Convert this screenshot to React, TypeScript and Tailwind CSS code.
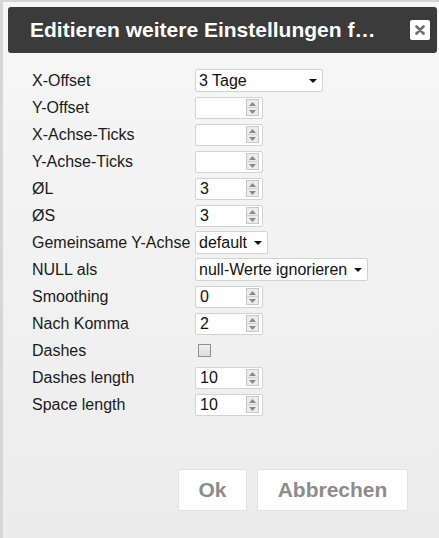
import React from "react";

const font = { fontFamily: '"Liberation Sans", Arial, sans-serif' };

function Spinner() {
  return (
    <div className="flex h-[17px] w-[13px] flex-col border border-[#c8c8c8] bg-[#ececec]">
      <div className="flex flex-1 items-center justify-center border-b border-[#d0d0d0]">
        <svg width="7" height="4" viewBox="0 0 7 4">
          <path d="M0 4 L3.5 0 L7 4 Z" fill="#8a8a8a" />
        </svg>
      </div>
      <div className="flex flex-1 items-center justify-center">
        <svg width="7" height="4" viewBox="0 0 7 4">
          <path d="M0 0 L3.5 4 L7 0 Z" fill="#8a8a8a" />
        </svg>
      </div>
    </div>
  );
}

function NumberInput({ value = "" }: { value?: string }) {
  return (
    <div className="flex h-[22px] w-[68px] items-center justify-between rounded-[2px] border border-[#d2d2d2] bg-white pl-[4px] pr-[3px] text-[16px] text-[#111]">
      <span>{value}</span>
      <Spinner />
    </div>
  );
}

function Select({ value, width }: { value: string; width: string }) {
  return (
    <div
      className={`flex h-[23px] ${width} items-center justify-between gap-[6px] rounded-[2px] border border-[#d2d2d2] bg-white pl-[3px] pr-[5px] text-[16px] text-[#111]`}
    >
      <span className="whitespace-nowrap">{value}</span>
      <svg width="8" height="4" viewBox="0 0 8 4" className="shrink-0">
        <path d="M0 0 L4 4 L8 0 Z" fill="#111" />
      </svg>
    </div>
  );
}

function Row({ label, children }: { label: string; children: React.ReactNode }) {
  return (
    <div className="flex h-[27px] items-center">
      <div className="w-[163px] whitespace-nowrap text-[16px] text-[#1a1a1a]">{label}</div>
      {children}
    </div>
  );
}

export default function App() {
  return (
    <div
      className="flex h-[538px] w-[439px] flex-col border-l-[3px] border-t-[2px] border-[#d6d6d6] bg-[#eeeeee]"
      style={font}
    >
      <div className="flex flex-1 flex-col bg-gradient-to-b from-[#f7f7f7] to-[#ececec] pl-[5px] pr-[2px] pt-[5px]">
        <div className="flex h-[46px] items-center justify-between rounded-[3px] bg-[#3b3b3b] pl-[22px] pr-[7px]">
          <span className="whitespace-nowrap text-[21px] font-bold text-white">Editieren weitere Einstellungen f…</span>
          <button className="flex h-[20px] w-[20px] items-center justify-center rounded-[2px] bg-white">
            <svg width="10" height="10" viewBox="0 0 10 10">
              <path d="M1.5 1.5 L8.5 8.5 M8.5 1.5 L1.5 8.5" stroke="#707070" strokeWidth="2.6" strokeLinecap="round" />
            </svg>
          </button>
        </div>

        <div className="flex flex-col pl-[24px] pt-[14px]">
          <Row label="X-Offset">
            <Select value="3 Tage" width="w-[128px]" />
          </Row>
          <Row label="Y-Offset">
            <NumberInput />
          </Row>
          <Row label="X-Achse-Ticks">
            <NumberInput />
          </Row>
          <Row label="Y-Achse-Ticks">
            <NumberInput />
          </Row>
          <Row label="ØL">
            <NumberInput value="3" />
          </Row>
          <Row label="ØS">
            <NumberInput value="3" />
          </Row>
          <Row label="Gemeinsame Y-Achse">
            <Select value="default" width="w-[73px]" />
          </Row>
          <Row label="NULL als">
            <Select value="null-Werte ignorieren" width="w-[173px]" />
          </Row>
          <Row label="Smoothing">
            <NumberInput value="0" />
          </Row>
          <Row label="Nach Komma">
            <NumberInput value="2" />
          </Row>
          <Row label="Dashes">
            <div className="ml-[3px] h-[13px] w-[13px] border border-[#8f8f8f] bg-gradient-to-b from-[#f0f0f0] to-[#dcdcdc]" />
          </Row>
          <Row label="Dashes length">
            <NumberInput value="10" />
          </Row>
          <Row label="Space length">
            <NumberInput value="10" />
          </Row>
        </div>

        <div className="mt-auto mb-[27px] flex justify-end gap-[10px] pr-[29px]">
          <button className="h-[42px] w-[69px] rounded-[2px] border border-[#e2e2e2] bg-white text-[21px] font-bold text-[#8c8c8c]">
            Ok
          </button>
          <button className="h-[42px] w-[151px] rounded-[2px] border border-[#e2e2e2] bg-white text-[21px] font-bold text-[#8c8c8c]">
            Abbrechen
          </button>
        </div>
      </div>
    </div>
  );
}
